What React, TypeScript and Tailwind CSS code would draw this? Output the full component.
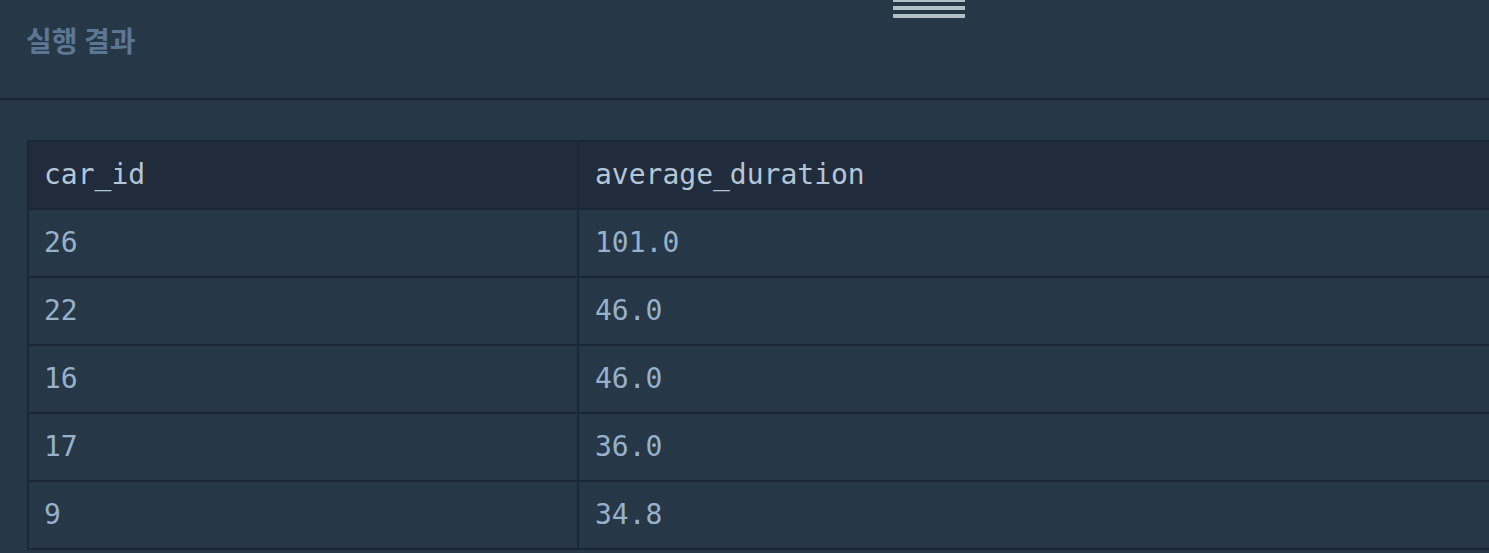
import React from "react";

const rows: [string, string][] = [
  ["26", "101.0"],
  ["22", "46.0"],
  ["16", "46.0"],
  ["17", "36.0"],
  ["9", "34.8"],
];

export default function App() {
  return (
    <div className="w-[1489px] h-[553px] overflow-hidden bg-[#263747] flex flex-col">
      <div className="relative h-[100px] shrink-0 border-b-2 border-[#1b2637]">
        <div className="absolute left-[893px] top-[-2px] w-[72px] flex flex-col gap-[4px]">
          <div className="h-[4px] bg-[#b2c0c8]" />
          <div className="h-[4px] bg-[#b2c0c8]" />
          <div className="h-[4px] bg-[#b2c0c8] rounded-b-[1px]" />
        </div>
        <div
          className="pl-[26px] pt-[20px] text-[28px] font-bold text-[#5c7794] leading-[40px]"
          style={{ fontFamily: '"Noto Sans CJK KR", "Noto Sans", sans-serif' }}
        >
          실행 결과
        </div>
      </div>
      <div className="pl-[27px] pt-[40px]">
        <div
          className="w-[1500px] border-l-2 border-t-2 border-[#1b2637] text-[28px] leading-[42px]"
          style={{ fontFamily: '"DejaVu Sans Mono", monospace' }}
        >
          <div className="flex h-[68px] bg-[#202b3c] border-b-2 border-[#1b2637] text-[#b4c6d6]">
            <div className="w-[550px] border-r-2 border-[#1b2637] pl-[15px] flex items-center">car_id</div>
            <div className="flex-1 pl-[16px] flex items-center">average_duration</div>
          </div>
          {rows.map(([a, b], i) => (
            <div key={i} className="flex h-[68px] border-b-2 border-[#1b2637] text-[#98b0c8]">
              <div className="w-[550px] border-r-2 border-[#1b2637] pl-[15px] flex items-center">{a}</div>
              <div className="flex-1 pl-[16px] flex items-center">{b}</div>
            </div>
          ))}
        </div>
      </div>
    </div>
  );
}
